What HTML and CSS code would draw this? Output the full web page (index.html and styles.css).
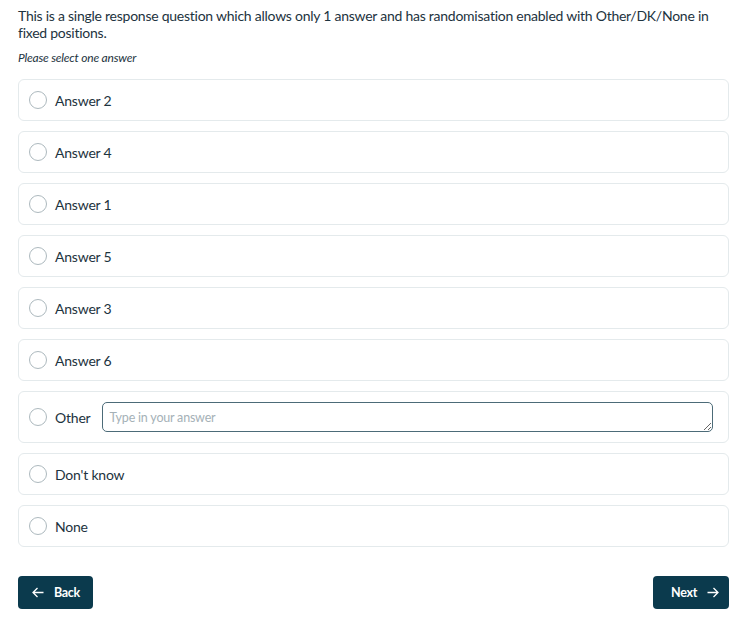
FILE: index.html
```html
<!DOCTYPE html>
<html>
<head>
<meta charset="utf-8">
<link rel="stylesheet" href="styles.css">
</head>
<body>
<div class="page">
  <div class="question">This is a single response question which allows only 1 answer and has randomisation enabled with Other/DK/None in fixed positions.</div>
  <div class="instruction">Please select one answer</div>
  <div class="options">
    <label class="option"><span class="radio"></span><span class="label">Answer 2</span></label>
    <label class="option"><span class="radio"></span><span class="label">Answer 4</span></label>
    <label class="option"><span class="radio"></span><span class="label">Answer 1</span></label>
    <label class="option"><span class="radio"></span><span class="label">Answer 5</span></label>
    <label class="option"><span class="radio"></span><span class="label">Answer 3</span></label>
    <label class="option"><span class="radio"></span><span class="label">Answer 6</span></label>
    <div class="option option-other"><span class="radio"></span><span class="label">Other</span><textarea class="other-input" placeholder="Type in your answer"></textarea></div>
    <label class="option"><span class="radio"></span><span class="label">Don't know</span></label>
    <label class="option"><span class="radio"></span><span class="label">None</span></label>
  </div>
  <div class="nav">
    <button class="btn btn-back"><svg width="12" height="11" viewBox="0 0 12 11"><path d="M11.5 5.5H1.2M5.5 1L1 5.5L5.5 10" fill="none" stroke="#fff" stroke-width="1.3"/></svg><span>Back</span></button>
    <button class="btn btn-next"><span>Next</span><svg width="12" height="11" viewBox="0 0 12 11"><path d="M0.5 5.5H10.8M6.5 1L11 5.5L6.5 10" fill="none" stroke="#fff" stroke-width="1.3"/></svg></button>
  </div>
</div>
</body>
</html>
```
FILE: styles.css
```css
* { box-sizing: border-box; }
html, body { margin: 0; padding: 0; background: #fff; }
body { font-family: Lato, "Open Sans", sans-serif; color: #1d3340; }
.page { width: 711px; margin-left: 18px; padding-top: 7px; }
.question { font-size: 14px; letter-spacing: -0.25px; line-height: 17px; }
.instruction { font-size: 12px; font-style: italic; letter-spacing: -0.2px; margin-top: 9px; line-height: 16px; }
.options { display: flex; flex-direction: column; gap: 10px; margin-top: 13px; }
.option { display: flex; align-items: center; height: 42px; border: 1px solid #e4eaec; border-radius: 6px; padding-left: 10px; font-size: 14px; letter-spacing: -0.2px; }
.option-other { height: 52px; padding-right: 15px; }
.radio { width: 18px; height: 18px; border-radius: 50%; border: 1px solid #adb9be; flex: none; }
.label { margin-left: 8px; }
.other-input { flex: 1; margin-left: 11px; height: 30px; border: 1.5px solid #4c6b78; border-radius: 5px; font-family: inherit; font-size: 12.5px; letter-spacing: -0.2px; line-height: 15px; padding: 7px 7px 5px; resize: vertical; color: #1d3340; }
.other-input::placeholder { color: #a5b1b7; }
.nav { display: flex; justify-content: space-between; margin-top: 29px; }
.btn { display: flex; align-items: center; gap: 10px; height: 33px; background: #0b3a4d; color: #fff; border: none; border-radius: 4px; font-family: inherit; font-weight: 700; font-size: 12.5px; letter-spacing: -0.3px; padding: 0; }
.btn-back { width: 75px; padding-left: 14px; }
.btn-next { width: 76px; padding-left: 18px; }
```
